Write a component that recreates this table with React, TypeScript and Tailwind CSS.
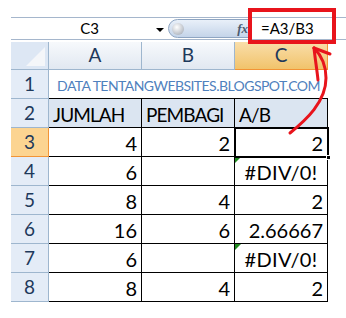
// Spreadsheet snippet: formula bar + a small A/B division table with #DIV/0! errors.

const FONT = { fontFamily: "Lato, 'Open Sans', 'Liberation Sans', sans-serif" };

type Row = { n: number; a: string; b: string; c: string; err?: boolean };

const ROWS: Row[] = [
  { n: 3, a: "4", b: "2", c: "2" },
  { n: 4, a: "6", b: "", c: "#DIV/0!", err: true },
  { n: 5, a: "8", b: "4", c: "2" },
  { n: 6, a: "16", b: "6", c: "2.66667" },
  { n: 7, a: "6", b: "", c: "#DIV/0!", err: true },
  { n: 8, a: "8", b: "4", c: "2" },
];

function RowHead({ n, active }: { n: number; active?: boolean }) {
  return (
    <div
      className={
        "flex items-center justify-center text-[19px] border-r border-b " +
        (active
          ? "bg-[#fcd491] text-[#1e395b] border-r-[#f29436] border-b-[#f29436]"
          : "bg-[#e4ecf7] text-[#1e395b] border-[#9eb6ce]")
      }
    >
      {n}
    </div>
  );
}

function ColHead({ label, active }: { label: string; active?: boolean }) {
  return (
    <div
      className={
        "flex items-center justify-center text-[19px] border-r border-b " +
        (active
          ? "bg-gradient-to-b from-[#f9dea9] to-[#f1c36a] text-[#1e395b] border-[#f29436]"
          : "bg-gradient-to-b from-[#f7f9fc] to-[#e1e8f1] text-[#1e395b] border-[#9eb6ce]")
      }
    >
      {label}
    </div>
  );
}

function Num({ v }: { v: string }) {
  return (
    <div className="flex items-center justify-end pr-[4px] pt-[2px] text-[20px] text-black border-r border-b border-black">
      {v}
    </div>
  );
}

function ErrCell({ v }: { v: string }) {
  return (
    <div className="relative flex items-center justify-center pt-[2px] text-[20px] tracking-[0.3px] text-black border-r border-b border-black">
      <span className="absolute left-0 top-0 w-0 h-0 border-t-[6px] border-t-[#1f8a1f] border-r-[6px] border-r-transparent" />
      {v}
    </div>
  );
}

export default function App() {
  return (
    <div className="relative w-[346px] h-[318px] bg-white overflow-hidden" style={FONT}>
      {/* formula bar */}
      <div className="mt-[17px] ml-[11px] h-[23px] flex border-t border-b border-[#a5b6cc] bg-white">
        <div className="relative w-[157px] flex items-center justify-center text-[15px] text-black">
          C3
          <span className="absolute right-[4px] top-[10px] w-0 h-0 border-x-[4px] border-x-transparent border-t-[4px] border-t-black" />
        </div>
        <div className="relative w-[83px] my-[1px] rounded-l-full bg-gradient-to-b from-[#e9f0f9] to-[#c4d4e9] border border-[#8ea5c2] flex items-center">
          <span className="ml-[3px] w-[12px] h-[12px] rounded-full bg-[radial-gradient(circle_at_40%_35%,#ffffff,#b9bec6_70%,#9aa0a8)]" />
          <span
            className="ml-auto mr-[2px] italic font-bold text-[13px] text-[#4a5a70]"
            style={{ fontFamily: "'Liberation Serif', serif" }}
          >
            fx
          </span>
        </div>
        <div className="flex-1 flex items-center pl-[10px] text-[15px] text-black">=A3/B3</div>
      </div>

      {/* sheet */}
      <div className="mt-[2px] ml-[11px] grid w-[317px] grid-cols-[38px_93px_93px_93px] grid-rows-[28px_repeat(8,29px)]">
        <div className="relative bg-[#dde7f4] border-r border-b border-[#9eb6ce]">
          <span className="absolute right-[3px] bottom-[3px] w-0 h-0 border-l-[19px] border-l-transparent border-b-[19px] border-b-[#f4f6f9]" />
        </div>
        <ColHead label="A" />
        <ColHead label="B" />
        <ColHead label="C" active />

        <RowHead n={1} />
        <div className="col-span-3 flex items-center justify-center pt-[2px] whitespace-nowrap text-[14px] tracking-[-0.55px] text-[#4f81bd] border-b border-black">
          DATA TENTANGWEBSITES.BLOGSPOT.COM
        </div>

        <RowHead n={2} />
        {["JUMLAH", "PEMBAGI", "A/B"].map((h) => (
          <div
            key={h}
            className="flex items-center pl-[4px] pt-[4px] whitespace-nowrap text-[19px] tracking-[-0.9px] text-black bg-[#dbe5f1] border-r border-b border-black"
          >
            {h}
          </div>
        ))}

        {ROWS.map((r) => (
          <div key={r.n} className="contents">
            <RowHead n={r.n} active={r.n === 3} />
            <Num v={r.a} />
            <Num v={r.b} />
            {r.err ? <ErrCell v={r.c} /> : <Num v={r.c} />}
          </div>
        ))}
      </div>

      {/* active cell C3 */}
      <div className="absolute left-[234px] top-[127px] w-[95px] h-[31px] border-2 border-black shadow-[inset_0_0_0_1px_#ffffff]" />
      <div className="absolute left-[326px] top-[155px] w-[5px] h-[5px] bg-black border border-white" />

      {/* red callout round the formula */}
      <div className="absolute left-[248px] top-[8px] w-[88px] h-[36px] border-[4px] border-[#e8141c]" />
      <svg className="absolute left-0 top-0" width="346" height="318" viewBox="0 0 346 318">
        <g fill="none" stroke="#e8141c" strokeWidth="3" strokeLinecap="round">
          <path d="M290 133 C 306 120, 326 102, 326 78 C 326 64, 321 55, 314 48" />
          <path d="M314 48 L 330 54" />
          <path d="M314 48 C 315 58, 317 70, 318 80" />
        </g>
      </svg>
    </div>
  );
}
